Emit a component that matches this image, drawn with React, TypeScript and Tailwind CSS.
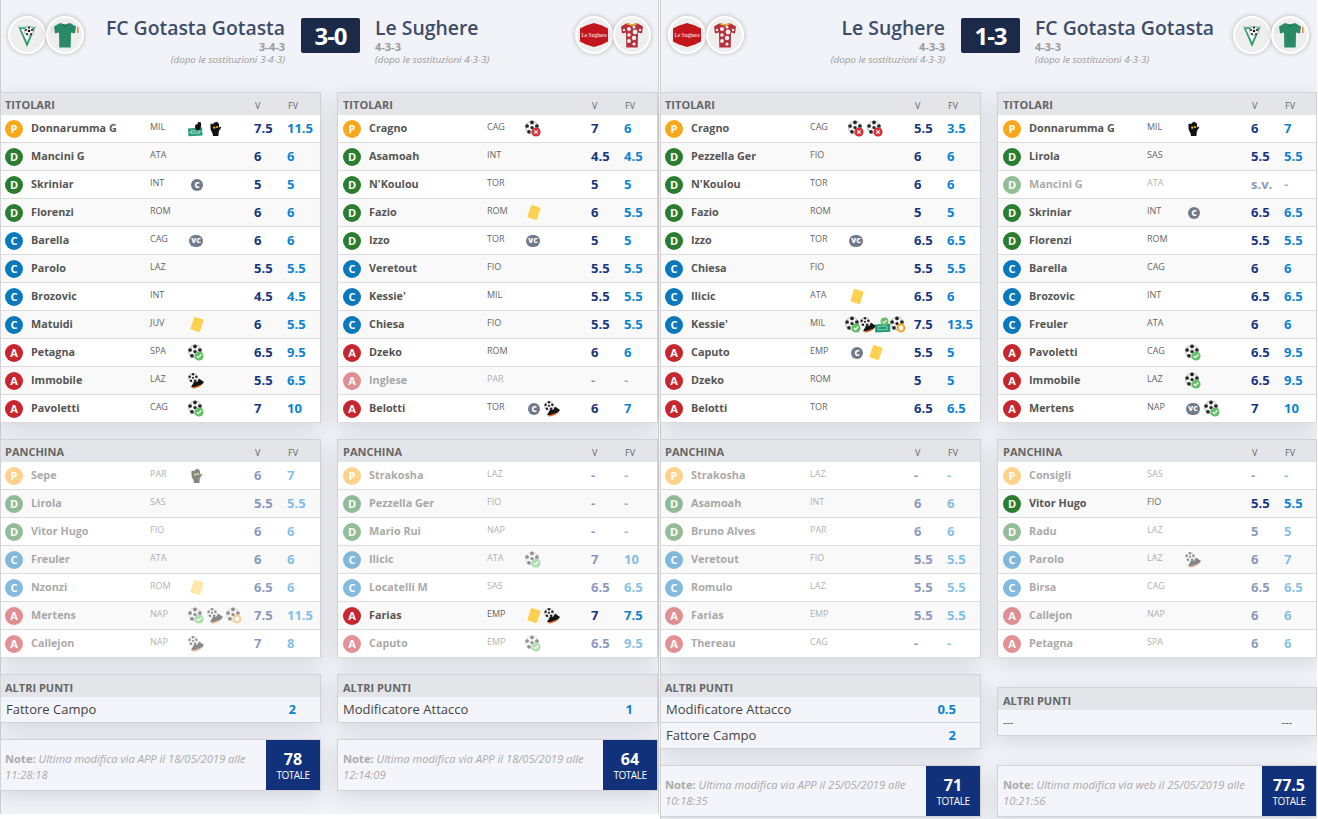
import React from "react";

type Ic = "field" | "fieldok" | "glove" | "c" | "vc" | "y" | "goal" | "assist" | "pen" | "miss";
type P = [string, string, string, Ic[], string, string, boolean?];

const Ball = ({ r = 6.5, cx = 7, cy = 6.5 }: { r?: number; cx?: number; cy?: number }) => {
  const s = r / 6;
  const d: [number, number][] = [[0, 0], [0, -4.7], [4.5, -1.4], [2.8, 3.9], [-2.8, 3.9], [-4.5, -1.4]];
  return (
    <g>
      <circle cx={cx} cy={cy} r={r} fill="#f2f2f2" stroke="#666" strokeWidth="0.4" />
      {d.map(([a, b], i) => (
        <circle key={i} cx={cx + a * s} cy={cy + b * s} r={(i === 0 ? 1.5 : 1.7) * s} fill="#262626" />
      ))}
    </g>
  );
};

const Icon = ({ k }: { k: Ic }) => {
  if (k === "c" || k === "vc")
    return (
      <span className={`flex h-[12px] items-center justify-center rounded-full bg-[#6f7a8c] font-extrabold leading-none text-white ${k === "c" ? "ml-[2px] w-[12px] text-[8px]" : "ml-0 w-[14px] text-[7px]"}`}>
        {k === "c" ? "C" : "VC"}
      </span>
    );
  if (k === "y")
    return <span className="ml-[3px] block h-[13px] w-[10px] rotate-[18deg] rounded-[1px] bg-[#fcd050]" />;
  return (
    <svg viewBox="0 0 16 16" className="-mx-px h-4 w-4 overflow-visible">
      {k === "goal" && (
        <g>
          <Ball />
          <circle cx="11" cy="11" r="4.6" fill="#63c067" />
          <path d="M8.8 11l1.6 1.7 3-3.2" fill="none" stroke="#fff" strokeWidth="1.2" />
        </g>
      )}
      {k === "miss" && (
        <g>
          <Ball />
          <circle cx="11" cy="11" r="4.6" fill="#d9303a" />
          <path d="M9.3 9.3l3.4 3.4m0-3.4l-3.4 3.4" stroke="#fff" strokeWidth="1.1" />
        </g>
      )}
      {k === "pen" && (
        <g>
          <Ball />
          <circle cx="11" cy="11" r="3.4" fill="#fff" stroke="#f5a623" strokeWidth="2" />
        </g>
      )}
      {k === "assist" && (
        <g>
          <Ball r={4.4} cx={5} cy={4.8} />
          <path d="M3 14l3-5 3.5-.5L11 5.5l5 3.5-2 2.5-6 3z" fill="#151515" />
          <path d="M3 15l11-3.8-2.2 2.2L6 15.5z" fill="#e2621b" />
        </g>
      )}
      {k === "glove" && (
        <g>
          <path d="M3.5 6.5L3.5 3l1.8-.4.8 1L7 1.4l1.4.2.3-.8 1.8.2.3 1.2 1.3.4-.2 4.2 1.5-1.2.9 1-2.4 3.4-.3 2.4-.2 2.6H6l-.4-2.6L3.8 9z" fill="#111" />
          <circle cx="7.3" cy="6.6" r="1.2" fill="#f0b429" />
          <circle cx="10" cy="6" r="1.1" fill="#f0b429" />
        </g>
      )}
      {k === "field" && (
        <g>
          <path d="M0 7.5l14-1 .5 8-14 .8z" fill="#1f9a77" />
          <path d="M3 9.5l8-.5.3 3.5-8 .5zM.5 11.5l14-.9" fill="none" stroke="#d5efe6" strokeWidth=".6" />
          <path d="M7 6l.5-2.5 2-.3.6-2.2 2.6.3.5 2.5-.6 3.4-1.4 2H8.2z" fill="#111" />
        </g>
      )}
      {k === "fieldok" && (
        <g>
          <path d="M0 7.5l15-.8.3 8-15 .8z" fill="#1f9a77" />
          <path d="M3 9.5l9-.5.3 3.5-9 .5z" fill="none" stroke="#d5efe6" strokeWidth=".6" />
          <circle cx="9.5" cy="4.5" r="4" fill="#63c067" />
          <path d="M7.6 4.5l1.4 1.5 2.6-2.9" fill="none" stroke="#fff" strokeWidth="1.1" />
        </g>
      )}
    </svg>
  );
};

const roleBg: Record<string, string> = {
  P: "bg-[#fba71b]",
  D: "bg-[#2a7d2f]",
  C: "bg-[#0a78bd]",
  A: "bg-[#c7262c]",
};

const Row = ({ p, second, alt, faded }: { p: P; second: boolean; alt: boolean; faded: boolean }) => {
  const [role, name, team, icons, v, fv, flip] = p;
  const dim = flip ? !faded : faded;
  return (
    <div className={`flex h-[28px] items-center border-b border-[#dcdcdc] ${alt ? "bg-[#f9f9f9]" : "bg-white"}`}>
      <div className={`flex h-full flex-1 items-center ${dim ? "opacity-50" : ""}`}>
        <span className={`flex h-[18px] w-[18px] shrink-0 items-center justify-center rounded-full text-[11px] font-bold leading-none text-white ${roleBg[role]} ${second ? "ml-[5px]" : "ml-[4px]"}`}>
          {role}
        </span>
        <span className={`shrink-0 truncate pl-[8px] text-[10.8px] font-bold text-[#555] ${second ? "w-[126px]" : "w-[127px]"}`}>{name}</span>
        <span className="-mt-[3px] w-[39px] shrink-0 text-[9px] text-[#666]">{team}</span>
        <span className={`flex h-full w-[65px] shrink-0 items-center ${icons.length > 3 ? "-ml-[3px] mr-[3px] gap-px" : "gap-[5px]"}`}>
          {icons.map((k, i) => (
            <span key={i} className="flex w-[14px] shrink-0 items-center">
              <Icon k={k} />
            </span>
          ))}
        </span>
        <span className="w-[33px] shrink-0 text-[13px] font-bold text-[#173680]">{v}</span>
        <span className="text-[13px] font-bold text-[#0a84d0]">{fv}</span>
      </div>
    </div>
  );
};

const Card = ({ title, rows, second, faded }: { title: string; rows: P[]; second: boolean; faded: boolean }) => (
  <div className="border-x border-t border-[#d2d3d6] shadow-[0_5px_20px_rgba(0,0,0,0.12)]">
    <div className={`flex h-[22px] items-center bg-[#e3e5e9] pt-[3px] text-[#666] ${second ? "pl-[5px]" : "pl-[4px]"}`}>
      <span className={`text-[11px] font-bold ${second ? "w-[249px]" : "w-[250px]"}`}>{title}</span>
      <span className="w-[33px] text-[9px] font-normal">V</span>
      <span className="text-[9px] font-normal">FV</span>
    </div>
    {rows.map((p, i) => (
      <Row key={i} p={p} second={second} alt={i % 2 === 1} faded={faded} />
    ))}
  </div>
);

const Altri = ({ rows, second }: { rows: [string, string][]; second: boolean }) => (
  <div className="border-x border-t border-[#d2d3d6] shadow-[0_5px_20px_rgba(0,0,0,0.12)]">
    <div className={`flex h-[22px] items-center bg-[#e3e5e9] pt-[5px] text-[11px] font-bold text-[#666] ${second ? "pl-[5px]" : "pl-[4px]"}`}>ALTRI PUNTI</div>
    {rows.map(([a, b], i) => (
      <div key={i} className={`flex h-[26px] items-center justify-between border-b border-[#d2d3d6] bg-[#f4f5fa] pr-[24px] ${second ? "pl-[5px]" : "pl-[5px]"}`}>
        {a === "---" ? <span className="text-[11px] text-[#555]">---</span> : <span className="text-[13px] text-[#444]">{a}</span>}
        {b === "---" ? <span className="text-[11px] text-[#555]">---</span> : <span className="text-[13px] font-bold text-[#0a84d0]">{b}</span>}
      </div>
    ))}
  </div>
);

const Note = ({ text, time, total, second }: { text: string; time: string; total: string; second: boolean }) => (
  <div className="flex h-[52px] border border-[#d2d3d6] bg-[#f4f5fa] shadow-[0_5px_20px_rgba(0,0,0,0.12)]">
    <div className={`flex-1 pt-[11px] text-[11.2px] leading-[16px] text-[#aaa] ${second ? "pl-[5px]" : "pl-[4px]"}`}>
      <b className="font-bold">Note:</b> <i>{text}</i>
      <br />
      <i>{time}</i>
    </div>
    <div className="flex w-[54px] shrink-0 flex-col items-center justify-center bg-[#11327a] text-white">
      <span className="text-[16px] font-bold leading-[20px]">{total}</span>
      <span className="text-[10px] leading-[13px] tracking-[-0.5px]">TOTALE</span>
    </div>
  </div>
);

const Circle = ({ children }: { children: React.ReactNode }) => (
  <span className="flex h-[38px] w-[38px] shrink-0 items-center justify-center rounded-full border-[2px] border-white bg-[#eeeeee] shadow-[0_0_5px_rgba(0,0,0,0.25)]">
    {children}
  </span>
);

const Pennant = () => (
  <svg viewBox="0 0 24 24" className="h-[24px] w-[24px]">
    <path d="M3 3h18L12 24z" fill="#2f9a6f" />
    <path d="M6 6h12L12 19z" fill="#fff" />
    <path d="M3 3h18l-.6 1.4H3.6z" fill="#bfe3d4" />
    <circle cx="14" cy="8" r="4.6" fill="#fff" stroke="#444" strokeWidth=".4" />
    <circle cx="14" cy="8" r="1.3" fill="#111" />
    <circle cx="14" cy="4.8" r="1" fill="#111" />
    <circle cx="17" cy="7" r="1" fill="#111" />
    <circle cx="11" cy="7" r="1" fill="#111" />
    <circle cx="12" cy="11" r="1" fill="#111" />
    <circle cx="16" cy="11" r="1" fill="#111" />
  </svg>
);

const Shirt = ({ fill, dots }: { fill: string; dots: boolean }) => (
  <svg viewBox="0 0 30 30" className="h-[30px] w-[30px]">
    <path d="M10 3l5 1.5L20 3l6 3.5-1 7-4-1-.3 15H9.3L9 12.5l-4 1-1-7z" fill={fill} />
    {dots ? (
      <g fill="#f4eeee">
        <circle cx="12" cy="9" r="2" />
        <circle cx="17" cy="7" r="1.5" />
        <circle cx="18" cy="12" r="2.4" />
        <circle cx="12" cy="15" r="1.8" />
        <circle cx="17" cy="18" r="2.2" />
        <circle cx="12" cy="21" r="1.9" />
        <circle cx="17" cy="24" r="1.6" />
        <circle cx="7" cy="10" r="1.2" />
        <circle cx="23" cy="10" r="1.2" />
        <path d="M10 3l5 1.5L20 3l1 1-6 2-6-2z" fill="#e8b93a" />
      </g>
    ) : (
      <g>
        <path d="M12 3.8l3 1.4 3-1.4-3 3.4z" fill="#0f6a48" />
        <rect x="1" y="7" width="1.6" height="6" fill="#ddd" />
        <rect x="27" y="7" width="1.6" height="6" fill="#f08a4b" />
      </g>
    )}
  </svg>
);

const Hex = () => (
  <svg viewBox="0 0 30 24" className="h-[24px] w-[30px]">
    <path d="M7 2.5l8-2.5 8 2.5 6 3v13l-6 3-8 2.5-8-2.5-6-3v-13z" fill="#c3161c" />
    <text x="15" y="14" textAnchor="middle" fontSize="5.5" fill="#fff" fontFamily="'Liberation Serif',serif">Le Sughere</text>
  </svg>
);

const GotastaLogos = () => (
  <div className="flex gap-0">
    <Circle><Pennant /></Circle>
    <Circle><Shirt fill="#2a8a66" dots={false} /></Circle>
  </div>
);
const SughereLogos = () => (
  <div className="flex gap-0">
    <Circle><Hex /></Circle>
    <Circle><Shirt fill="#b5303a" dots={true} /></Circle>
  </div>
);

const Team = ({ name, form, right }: { name: string; form: string; right: boolean }) => (
  <div className={right ? "text-right" : "text-left"}>
    <div className="text-[19.4px] font-semibold leading-[24px] text-[#3d4d69]">{name}</div>
    <div className="text-[11px] font-bold leading-[13px] text-[#9a9a9a]">{form}</div>
    <div className="text-[9.8px] italic leading-[13px] text-[#9a9a9a]">(dopo le sostituzioni {form})</div>
  </div>
);

const Header = ({ home, away, score, hf, af, homeLogos, awayLogos }: { home: string; away: string; score: string; hf: string; af: string; homeLogos: React.ReactNode; awayLogos: React.ReactNode }) => (
  <div className="flex h-[92px]">
    <div className="flex w-[301px] shrink-0 items-start justify-between pl-[8px] pr-[16px] pt-[16px]">
      {homeLogos}
      <Team name={home} form={hf} right={true} />
    </div>
    <div className="mt-[18px] flex h-[35px] w-[59px] shrink-0 items-center justify-center rounded-[2px] bg-[#1a2a48] text-[24px] font-bold tracking-[-1px] text-white">{score}</div>
    <div className="flex flex-1 items-start justify-between pl-[15px] pr-[8px] pt-[16px]">
      <Team name={away} form={af} right={false} />
      {awayLogos}
    </div>
  </div>
);

const Column = ({ tit, pan, altri, note, second, altriPad }: { tit: P[]; pan: P[]; altri: [string, string][]; note: [string, string, string]; second: boolean; altriPad: boolean }) => (
  <div className="flex flex-col">
    <Card title="TITOLARI" rows={tit} second={second} faded={false} />
    <div className="mt-[16px]">
      <Card title="PANCHINA" rows={pan} second={second} faded={true} />
    </div>
    <div className={altriPad ? "mb-[13px] mt-[29px]" : "mt-[16px]"}>
      <Altri rows={altri} second={second} />
    </div>
    <div className="mt-[16px]">
      <Note text={note[0]} time={note[1]} total={note[2]} second={second} />
    </div>
  </div>
);

const g1t: P[] = [
  ["P", "Donnarumma G", "MIL", ["field", "glove"], "7.5", "11.5"],
  ["D", "Mancini G", "ATA", [], "6", "6"],
  ["D", "Skriniar", "INT", ["c"], "5", "5"],
  ["D", "Florenzi", "ROM", [], "6", "6"],
  ["C", "Barella", "CAG", ["vc"], "6", "6"],
  ["C", "Parolo", "LAZ", [], "5.5", "5.5"],
  ["C", "Brozovic", "INT", [], "4.5", "4.5"],
  ["C", "Matuidi", "JUV", ["y"], "6", "5.5"],
  ["A", "Petagna", "SPA", ["goal"], "6.5", "9.5"],
  ["A", "Immobile", "LAZ", ["assist"], "5.5", "6.5"],
  ["A", "Pavoletti", "CAG", ["goal"], "7", "10"],
];
const g1p: P[] = [
  ["P", "Sepe", "PAR", ["glove"], "6", "7"],
  ["D", "Lirola", "SAS", [], "5.5", "5.5"],
  ["D", "Vitor Hugo", "FIO", [], "6", "6"],
  ["C", "Freuler", "ATA", [], "6", "6"],
  ["C", "Nzonzi", "ROM", ["y"], "6.5", "6"],
  ["A", "Mertens", "NAP", ["goal", "assist", "pen"], "7.5", "11.5"],
  ["A", "Callejon", "NAP", ["assist"], "7", "8"],
];
const s1t: P[] = [
  ["P", "Cragno", "CAG", ["miss"], "7", "6"],
  ["D", "Asamoah", "INT", [], "4.5", "4.5"],
  ["D", "N'Koulou", "TOR", [], "5", "5"],
  ["D", "Fazio", "ROM", ["y"], "6", "5.5"],
  ["D", "Izzo", "TOR", ["vc"], "5", "5"],
  ["C", "Veretout", "FIO", [], "5.5", "5.5"],
  ["C", "Kessie'", "MIL", [], "5.5", "5.5"],
  ["C", "Chiesa", "FIO", [], "5.5", "5.5"],
  ["A", "Dzeko", "ROM", [], "6", "6"],
  ["A", "Inglese", "PAR", [], "-", "-", true],
  ["A", "Belotti", "TOR", ["c", "assist"], "6", "7"],
];
const s1p: P[] = [
  ["P", "Strakosha", "LAZ", [], "-", "-"],
  ["D", "Pezzella Ger", "FIO", [], "-", "-"],
  ["D", "Mario Rui", "NAP", [], "-", "-"],
  ["C", "Ilicic", "ATA", ["goal"], "7", "10"],
  ["C", "Locatelli M", "SAS", [], "6.5", "6.5"],
  ["A", "Farias", "EMP", ["y", "assist"], "7", "7.5", true],
  ["A", "Caputo", "EMP", ["goal"], "6.5", "9.5"],
];
const s2t: P[] = [
  ["P", "Cragno", "CAG", ["miss", "miss"], "5.5", "3.5"],
  ["D", "Pezzella Ger", "FIO", [], "6", "6"],
  ["D", "N'Koulou", "TOR", [], "6", "6"],
  ["D", "Fazio", "ROM", [], "5", "5"],
  ["D", "Izzo", "TOR", ["vc"], "6.5", "6.5"],
  ["C", "Chiesa", "FIO", [], "5.5", "5.5"],
  ["C", "Ilicic", "ATA", ["y"], "6.5", "6"],
  ["C", "Kessie'", "MIL", ["goal", "assist", "fieldok", "pen"], "7.5", "13.5"],
  ["A", "Caputo", "EMP", ["c", "y"], "5.5", "5"],
  ["A", "Dzeko", "ROM", [], "5", "5"],
  ["A", "Belotti", "TOR", [], "6.5", "6.5"],
];
const s2p: P[] = [
  ["P", "Strakosha", "LAZ", [], "-", "-"],
  ["D", "Asamoah", "INT", [], "6", "6"],
  ["D", "Bruno Alves", "PAR", [], "6", "6"],
  ["C", "Veretout", "FIO", [], "5.5", "5.5"],
  ["C", "Romulo", "LAZ", [], "5.5", "5.5"],
  ["A", "Farias", "EMP", [], "5.5", "5.5"],
  ["A", "Thereau", "CAG", [], "-", "-"],
];
const g2t: P[] = [
  ["P", "Donnarumma G", "MIL", ["glove"], "6", "7"],
  ["D", "Lirola", "SAS", [], "5.5", "5.5"],
  ["D", "Mancini G", "ATA", [], "s.v.", "-", true],
  ["D", "Skriniar", "INT", ["c"], "6.5", "6.5"],
  ["D", "Florenzi", "ROM", [], "5.5", "5.5"],
  ["C", "Barella", "CAG", [], "6", "6"],
  ["C", "Brozovic", "INT", [], "6.5", "6.5"],
  ["C", "Freuler", "ATA", [], "6", "6"],
  ["A", "Pavoletti", "CAG", ["goal"], "6.5", "9.5"],
  ["A", "Immobile", "LAZ", ["goal"], "6.5", "9.5"],
  ["A", "Mertens", "NAP", ["vc", "goal"], "7", "10"],
];
const g2p: P[] = [
  ["P", "Consigli", "SAS", [], "-", "-"],
  ["D", "Vitor Hugo", "FIO", [], "5.5", "5.5", true],
  ["D", "Radu", "LAZ", [], "5", "5"],
  ["C", "Parolo", "LAZ", ["assist"], "6", "7"],
  ["C", "Birsa", "CAG", [], "6.5", "6.5"],
  ["A", "Callejon", "NAP", [], "6", "6"],
  ["A", "Petagna", "SPA", [], "6", "6"],
];

export default function App() {
  return (
    <div className="flex h-[819px] w-[1318px] overflow-hidden bg-white font-['Open_Sans',sans-serif]">
      <div className="h-[814px] w-[659px] shrink-0 bg-[#f1f3f8] shadow-[inset_1px_0_0_#cfcfd2,inset_-1px_0_0_#cfcfd2]">
        <Header home="FC Gotasta Gotasta" away="Le Sughere" score="3-0" hf="3-4-3" af="4-3-3" homeLogos={<GotastaLogos />} awayLogos={<SughereLogos />} />
        <div className="grid grid-cols-[321px_321px] gap-x-[16px]">
          <Column tit={g1t} pan={g1p} altri={[["Fattore Campo", "2"]]} note={["Ultima modifica via APP il 18/05/2019 alle", "11:28:18", "78"]} second={false} altriPad={false} />
          <Column tit={s1t} pan={s1p} altri={[["Modificatore Attacco", "1"]]} note={["Ultima modifica via APP il 18/05/2019 alle", "12:14:09", "64"]} second={true} altriPad={false} />
        </div>
      </div>
      <div className="ml-px h-[819px] w-[657px] shrink-0 overflow-hidden bg-[#f1f3f8] shadow-[inset_1px_0_0_#cfcfd2]">
        <Header home="Le Sughere" away="FC Gotasta Gotasta" score="1-3" hf="4-3-3" af="4-3-3" homeLogos={<SughereLogos />} awayLogos={<GotastaLogos />} />
        <div className="grid grid-cols-[321px_320px] gap-x-[16px]">
          <Column tit={s2t} pan={s2p} altri={[["Modificatore Attacco", "0.5"], ["Fattore Campo", "2"]]} note={["Ultima modifica via APP il 25/05/2019 alle", "10:18:35", "71"]} second={false} altriPad={false} />
          <Column tit={g2t} pan={g2p} altri={[["---", "---"]]} note={["Ultima modifica via web il 25/05/2019 alle", "10:21:56", "77.5"]} second={true} altriPad={true} />
        </div>
      </div>
    </div>
  );
}
